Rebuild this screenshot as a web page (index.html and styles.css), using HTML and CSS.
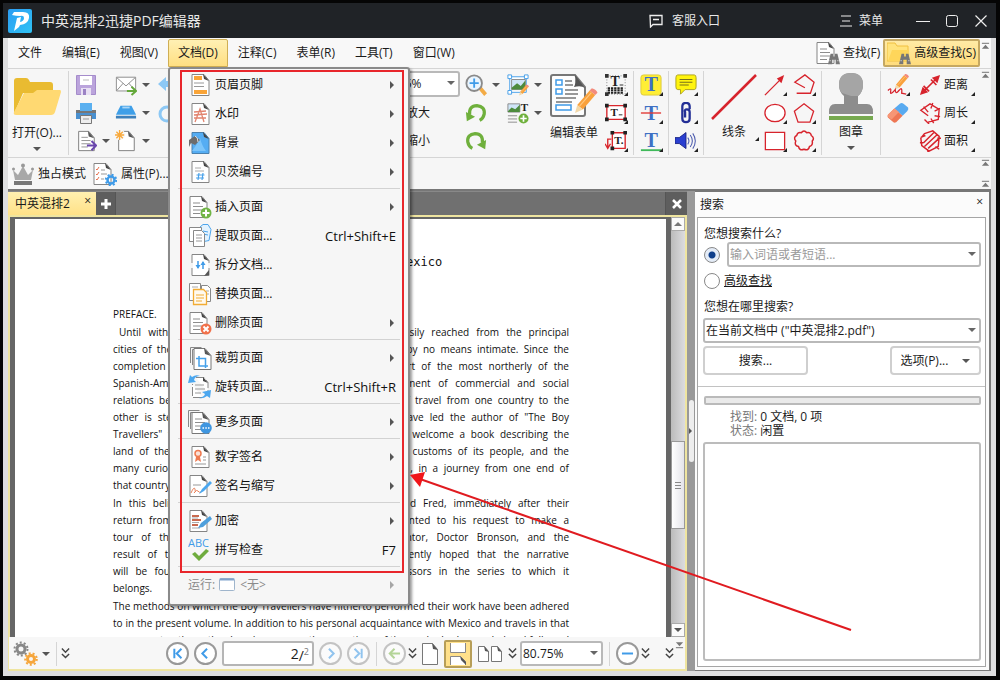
FILE: index.html
```html
<!DOCTYPE html>
<html lang="zh-CN">
<head>
<meta charset="utf-8">
<title>中英混排2迅捷PDF编辑器</title>
<link rel="stylesheet" href="styles.css">
</head>
<body>
<svg class="defs" aria-hidden="true">
  <symbol id="doc" viewBox="0 0 24 24"><path d="M4 1.500h12l5 6v15H4z" fill="#fff" stroke="#858585"/><path d="M15 1l6 7-5-2z" fill="#444"/></symbol>
  <symbol id="lines" viewBox="0 0 24 24"><path d="M7 8h7M7 11.500h10M7 15h10M7 18.500h7" stroke="#8d8d8d" fill="none"/></symbol>
  <symbol id="pencil" viewBox="0 0 24 24"><path d="M6 16L17 3l5 4-11 13z" fill="#f9a13c"/><path d="M17 3l2-2q4 1 5 4l-2 2z" fill="#f38b7c"/><path d="M6 16l5 4-7 3z" fill="#f3d8a8"/><path d="M8 17L18.500 5" stroke="#ffc880"/></symbol>
  <symbol id="chev" viewBox="0 0 10 14"><path d="M1 1.500l4 4 4-4M1 7.500l4 4 4-4" fill="none" stroke="#444" stroke-width="1.600"/></symbol>
  <symbol id="top" viewBox="0 0 10 8"><path d="M1 1h8" stroke="#666"/><path d="M5 2.500L9 7H1z" fill="#777"/></symbol>
  <symbol id="bino" viewBox="0 0 14 14"><path d="M3 1h3v3h2V1h3l3 12H9V8H5v5H0z" fill="#777"/><path d="M1.500 9h2M10.500 9h2" stroke="#ccc"/></symbol>
  <symbol id="edpage" viewBox="0 0 24 24"><path d="M4 1.500h11l6 7v14H4z" fill="#fff" stroke="#777"/><path d="M14 1l7 8-6-2z" fill="#555"/></symbol>
</svg>

<header class="titlebar">
  <svg class="logo" viewBox="0 0 24 24"><defs><linearGradient id="lg" x2="1" y2="1"><stop stop-color="#2c9cf2"/><stop offset="1" stop-color="#2fc3f5"/></linearGradient></defs><rect width="24" height="24" rx="2" fill="url(#lg)"/><path d="M6 3h9q7 0 6 6-1 6-9 7l-1 2-5 4 3-13 4-1-1 5q4-1 4-4t-4-2q-4 0-8-1z" fill="#fff"/></svg>
  <h1>中英混排2迅捷PDF编辑器</h1>
  <button class="tb service"><svg width="14" height="14" viewBox="0 0 14 14"><path d="M1 1.500h12v9H4L1.500 13z M4 5.500h6" fill="none" stroke="#eee" stroke-width="1.300"/></svg>客服入口</button>
  <button class="tb main"><svg width="14" height="14" viewBox="0 0 14 14"><path d="M2 2h10M3 7h8M1 12h12" stroke="#eee"/></svg>菜单</button>
  <button class="tb win" aria-label="最小化"><svg width="14" height="14" viewBox="0 0 14 14"><path d="M0 7.500h14" stroke="#eee"/></svg></button>
  <button class="tb win" aria-label="最大化"><svg width="14" height="14" viewBox="0 0 14 14"><rect x="1.500" y="1.500" width="11" height="11" rx="2" fill="none" stroke="#eee"/></svg></button>
  <button class="tb win" aria-label="关闭"><svg width="14" height="14" viewBox="0 0 14 14"><path d="M1.500 1.500l11 11M12.500 1.500l-11 11" stroke="#eee" stroke-width="1.200"/></svg></button>
</header>

<div class="frame">
<div class="app">
  <nav class="menubar">
    <button>文件</button><button>编辑(E)</button><button>视图(V)</button>
    <div class="dropdown">
      <button class="open">文档(D)</button>
      <div class="menu" role="menu">
        <button class="mi"><svg><use href="#doc"/><path d="M6 3h8v4H6zM6 17h13v4H6z" fill="#f9a437"/><path d="M6 10h10M6 13.500h10" stroke="#999"/></svg>页眉页脚<i class="sub"></i></button>
        <button class="mi"><svg><use href="#doc"/><path d="M7 20l5-13 4 13M6 10l12-1M6 13l13-1M6 16l12 0" fill="none" stroke="#e2846f" stroke-width="1.300"/></svg>水印<i class="sub"></i></button>
        <button class="mi"><svg><path d="M4 1.500h12l5 6v15H4z" fill="#55adf3" stroke="#4a80ad"/><path d="M15 1l6 7-5-2z" fill="#444"/><path d="M4 20q5-6 8-13 2 8 6 13z" fill="#7cc5fa"/><path d="M1 9l6-4 5 4-5 5-4-2-2 4z" fill="#6c6c6c"/><path d="M7 5q3 1 3 6" stroke="#ddd" fill="none"/></svg>背景<i class="sub"></i></button>
        <button class="mi"><svg><use href="#doc"/><path d="M7 8h6M7 11h9" stroke="#aaa"/><path d="M11 13l-1 7M15 13l-1 7M8.500 15h8M8 18h8" stroke="#4aa2ea" stroke-width="1.200"/></svg>贝茨编号<i class="sub"></i></button>
        <hr>
        <button class="mi"><svg><g transform="translate(-2)"><use href="#doc"/><use href="#lines"/></g><circle cx="18" cy="18" r="5.500" fill="#70b545"/><path d="M18 14.500v7M14.500 18h7" stroke="#fff" stroke-width="2"/></svg>插入页面<i class="sub"></i></button>
        <button class="mi"><svg><path d="M12 3l3-2.500h5l3 5-2 11-5 1z" fill="#e3f3ff" stroke="#4da5ec"/><path d="M15 7l5 1M15 10l5 1" stroke="#4da5ec"/><path d="M1.500 3.500h12v14h-12z" fill="#fff" stroke="#888"/><path d="M5.500 6.500h8l3 3v13h-11z" fill="#fff" stroke="#888"/><path d="M8 11h6M8 14h6M8 17h6" stroke="#999"/></svg>提取页面...<kbd>Ctrl+Shift+E</kbd></button>
        <button class="mi"><svg><use href="#doc"/><path d="M21 17l-5 6 5-1z" fill="#555"/><path d="M10 8v7M15 16V9" stroke="#3f9be8" stroke-width="1.500"/><path d="M7.500 12h5L10 16zM12.500 12h5L15 8z" fill="#3f9be8"/><path d="M4 10v5M21 10v5" stroke="#f5f5f5" stroke-width="2"/></svg>拆分文档...</button>
        <button class="mi"><svg><path d="M1.500 1.500h11v17h-11z" fill="#fff" stroke="#888"/><path d="M13.500 3.500h6l3 3v13h-9z" fill="#fff" stroke="#888"/><path d="M4 5h6M18 9h3M18 12h3" stroke="#aaa"/><path d="M5.500 7.500h10l3 3v12h-13z" fill="#fffaf0" stroke="#f2ac34" stroke-width="1.300"/><path d="M8 13h8M8 16h8M8 19h6" stroke="#f2ac34"/></svg>替换页面...</button>
        <button class="mi"><svg><g transform="translate(-2)"><use href="#doc"/><use href="#lines"/></g><circle cx="18" cy="18" r="5.500" fill="#f1714a"/><path d="M15.500 15.500l5 5M20.500 15.500l-5 5" stroke="#fff" stroke-width="2"/></svg>删除页面<i class="sub"></i></button>
        <hr>
        <button class="mi"><svg><path d="M2.500 17v-15.500h11M4.500 19V3.500h11" fill="none" stroke="#888"/><g transform="translate(2 1)"><use href="#edpage"/></g><path d="M11 10v10h9M8 12.500h9.500V22" stroke="#45a1ea" stroke-width="1.500" fill="none"/></svg>裁剪页面<i class="sub"></i></button>
        <button class="mi"><svg><path d="M8 2.500h8l4 5V18M14 22.500H4.500V9" fill="#fff" stroke="#888" stroke-dasharray="9 2"/><path d="M15 2l5 6-5-2z" fill="#444"/><path d="M7 10h9M7 14h10M7 18h6" stroke="#999"/><path d="M0 8l2-8 2 2q4-3 8-1-5 0-6 4l2 2zM23 15l-1 8-3-2q-4 3-8 2 5-1 6-4l-3-2z" fill="#4ba7ef"/></svg>旋转页面...<kbd>Ctrl+Shift+R</kbd></button>
        <hr>
        <button class="mi"><svg><path d="M.5 17V.5h11M2.500 19V2.500h11" fill="none" stroke="#888"/><g transform="translate(0 1)"><use href="#edpage"/><use href="#lines"/></g><circle cx="18" cy="18" r="5.800" fill="#3f96e0"/><path d="M14.500 18h1.500M17.300 18h1.500M20 18h1.500" stroke="#fff" stroke-width="1.600"/></svg>更多页面<i class="sub"></i></button>
        <hr>
        <button class="mi"><svg><use href="#doc"/><circle cx="10" cy="8.500" r="3" fill="#fbe0d6" stroke="#ee7a50" stroke-width="1.500"/><path d="M8 12l-1 5 3-2 3 2-1-5" fill="#ee7a50"/><path d="M15 12h3M15 15h3M7 19h11" stroke="#999"/></svg>数字签名<i class="sub"></i></button>
        <button class="mi"><svg><g transform="translate(-2)"><use href="#doc"/></g><path d="M5 11h8" stroke="#999"/><path d="M3 19q3-7 4-4t-1 4q3-4 4-2t3 1" stroke="#e9825b" fill="none"/><path d="M11 20l3-5 8-8 2 2-8 8z" fill="#4ba7ef"/></svg>签名与缩写<i class="sub"></i></button>
        <hr>
        <button class="mi"><svg><g transform="translate(-2)"><use href="#doc"/></g><path d="M4 7h7M4 11h9M4 16h6" stroke="#c96a4f" stroke-width="2.200"/><path d="M4 9h6M4 13.500h7M4 19h8" stroke="#aaa"/><path d="M10 19l3-5 9-7 2 3-9 8z" fill="#4e9fdc"/></svg>加密<i class="sub"></i></button>
        <button class="mi"><svg><text x="0" y="9" class="abc">ABC</text><path d="M4 16l3-2 4 4 7-7 3 2-10 10z" fill="#6fac3e"/></svg>拼写检查<kbd>F7</kbd></button>
        <hr>
        <button class="mi run" disabled>运行:<svg class="runico" viewBox="0 0 16 13"><rect x=".5" y=".5" width="15" height="12" rx="1" fill="#fff" stroke="#9fb5cc"/><path d="M1 1.500h14" stroke="#7fa3cc" stroke-width="2"/></svg>&lt;无&gt;<i class="sub"></i></button>
      </div>
    </div>
    <button>注释(C)</button><button>表单(R)</button><button>工具(T)</button><button>窗口(W)</button>
    <button class="find"><svg width="24" height="24" viewBox="0 0 24 24"><g transform="translate(-3)"><use href="#doc"/><use href="#lines"/></g><use href="#bino" x="12" y="12" width="12" height="12"/></svg>查找(F)</button>
    <button class="find adv"><svg width="24" height="24" viewBox="0 0 24 24"><path d="M0 2h8l2 3h11v15H0z" fill="#ffe37d" stroke="#f0c040"/><path d="M1 20L5 9h17l-2 11z" fill="#ffd65a"/><use href="#bino" x="12" y="12" width="12" height="12"/></svg>高级查找(S)</button>
    <svg class="grip"><use href="#top"/></svg>
  </nav>

  <div class="ribbon">
    <button class="big openbtn"><svg width="48" height="40" viewBox="0 0 48 40"><path d="M1 3q0-3 3-3h9q2 0 3 2l1 2h20q3 0 3 3v8H10L1 36z" fill="#e9bb31"/><path d="M11 15h9l4-3h23q1 0 1 2l-6 20q-1 3-4 3H3q-3 0-2-3z" fill="#ffd972"/></svg><span>打开(O)...</span><i class="dn"></i></button>
    <div class="sep"></div>
    <div class="col wide">
      <button aria-label="保存"><svg><path d="M1.500 1.500h19v19h-19z" fill="#bba4dc" stroke="#a58ccb"/><path d="M5 2h12v9H5z" fill="#fff"/><path d="M8 6h6" stroke="#bbb"/><path d="M6 14h10v7H6z" fill="#e8e0f3"/><path d="M8 15h3v6H8z" fill="#9b82c4"/></svg></button>
      <button aria-label="打印"><svg><path d="M1 8h20v9H1z" fill="#4a90cf"/><path d="M1 8h20v3H1z" fill="#777"/><path d="M5 1h12v8H5z" fill="#5ab0f0"/><path d="M5.500 13.500h11v8h-11z" fill="#eee" stroke="#777"/><path d="M8 17h6" stroke="#999"/></svg></button>
      <button aria-label="导出"><svg viewBox="0 0 24 24"><use href="#edpage"/><use href="#lines"/><path d="M13 17h9M18 12l5 5-5 5" fill="none" stroke="#6a46ad" stroke-width="2.200"/></svg><i class="dn"></i></button>
    </div>
    <div class="col wide">
      <button aria-label="邮件"><svg viewBox="0 0 24 24"><path d="M1.500 3.500h21v15h-21z" fill="#fff" stroke="#888"/><path d="M2 4l10 9L22 4M2 18l7-8M22 18l-7-8" fill="none" stroke="#888"/><path d="M13 18.500h9M18 14l5 4.500-5 4.500" fill="none" stroke="#64a83a" stroke-width="2.200"/></svg><i class="dn"></i></button>
      <button aria-label="扫描"><svg viewBox="0 0 24 24"><path d="M6 4h12l5 10H1z" fill="#3f9fe8"/><path d="M8 6h8" stroke="#a9d6f8" stroke-width="2"/><path d="M1 15h22v3H1z" fill="#3d80bb"/></svg><i class="dn"></i></button>
      <button aria-label="新建"><svg viewBox="0 0 24 24"><use href="#edpage"/><circle cx="5" cy="5" r="6" fill="#f7f7f7"/><path d="M5 0v11M0 5.500h10M1.500 2l7 7M8.500 2l-7 7" stroke="#f8a93c" stroke-width="1.500"/></svg><i class="dn"></i></button>
    </div>
    <div class="col">
      <button aria-label="撤销"><svg><path d="M3 10l8-7v4h9v6h-9v4z" fill="#8cc8f5"/></svg></button>
      <button aria-label="重做"><svg><circle cx="12" cy="12" r="7" fill="none" stroke="#8cc8f5" stroke-width="3"/></svg></button>
    </div>
    <div class="col zoom">
      <div class="select"><select aria-label="缩放比例"><option>80.75%</option></select></div>
      <button>放大</button>
      <button>缩小</button>
    </div>
    <div class="col wide rot">
      <button aria-label="缩放工具"><svg viewBox="0 0 24 24"><path d="M15 17l3-3 6 7-3 3z" fill="#f3ab45"/><circle cx="10" cy="10" r="8.500" fill="#e9f5ff" stroke="#8a8a8a" stroke-width="2"/><path d="M10 5v10M5 10h10" stroke="#3f9be8" stroke-width="2"/></svg><i class="dn"></i></button>
      <button aria-label="向左旋转"><svg viewBox="0 0 24 24"><path d="M5 14Q4 4 13 4q9 1 8 9-1 5-5 7" fill="none" stroke="#6fb03c" stroke-width="3.500"/><path d="M1 11l1 10 9-5z" fill="#6fb03c"/></svg></button>
      <button aria-label="向右旋转"><svg viewBox="0 0 24 24"><path d="M19 14Q20 4 11 4q-9 1-8 9 1 5 5 7" fill="none" stroke="#6fb03c" stroke-width="3.500"/><path d="M23 11l-1 10-9-5z" fill="#6fb03c"/></svg></button>
    </div>
    <div class="col wide img">
      <button aria-label="编辑图像"><svg viewBox="0 0 24 24"><path d="M3 3h18v17H3z" fill="#fff" stroke="#3f9be8"/><path d="M5 6h15v11H5z" fill="#cfe5f7" stroke="#888"/><path d="M5 15l6-5 4 3 5-6v10H5z" fill="#4d8b3d"/><path d="M1 1h4v4H1zM19 1h4v4h-4zM1 18h4v4H1z" fill="#fff" stroke="#3f9be8"/><use href="#pencil" x="11" y="11" width="13" height="13"/></svg><i class="dn"></i></button>
      <button aria-label="添加内容"><svg viewBox="0 0 24 24"><path d="M1 2h13v9H1z" fill="#cfe5f7" stroke="#888"/><path d="M1 10l4-4 4 2 5-5v8H1z" fill="#4d8b3d"/><text x="15" y="10" class="serif sm">T</text><path d="M1 15h10M1 18.500h10M1 22h10" stroke="#888"/><circle cx="18" cy="18" r="5.500" fill="#6fb03c"/><path d="M18 14.500v7M14.500 18h7" stroke="#fff" stroke-width="1.800"/></svg><i class="dn"></i></button>
    </div>
    <button class="big form"><svg width="48" height="44" viewBox="0 0 48 44"><path d="M3 1h22l10 12v27q0 2-2 2H3q-2 0-2-2V3q0-2 2-2z" fill="#fdfdfd" stroke="#777" stroke-width="2"/><path d="M25 1q1 9-1 12 7-2 11 1z" fill="#555"/><path d="M6 6h6v5H6zM6 15h6v5H6zM6 31h15v5H6z" fill="#fff" stroke="#3f9be8" stroke-width="1.500"/><path d="M15 7h7M15 11h8M15 16h13M15 20h13M6 24h20M6 28h16" stroke="#777" stroke-width="1.500"/><use href="#pencil" x="20" y="13" width="28" height="27"/></svg><span>编辑表单</span></button>
    <div class="col">
      <button class="more" aria-label="打字机"><svg viewBox="0 0 24 24"><path d="M2 2h20v20H2z" fill="none" stroke="#777" stroke-dasharray="1 2"/><path d="M0 0h4v4H0zM20 0h4v4h-4zM0 20h4v4H0z" fill="#333"/><text x="6" y="13" class="serif">T</text><path d="M16 12h4" stroke="#222"/><path d="M3 15.500h17M3 18h17M3 20.500h17" stroke="#222" stroke-width="2" stroke-dasharray="2.500 1"/></svg></button>
      <button class="more" aria-label="文本框"><svg viewBox="0 0 24 24"><path d="M2 4h20v15H2z" fill="#fff" stroke="#d9262c" stroke-width="1.500"/><path d="M0 2h4v4H0zM20 2h4v4h-4zM0 17h4v4H0zM20 17h4v4h-4z" fill="#222"/><text x="6" y="15" class="serif sm">T</text><path d="M15 14h4" stroke="#222"/></svg></button>
      <button class="more" aria-label="标注"><svg viewBox="0 0 24 24"><path d="M8 3h14v17H8z" fill="#fff" stroke="#d9262c" stroke-width="1.500"/><path d="M7 10H3v9M0 15l3 5 3-5" fill="none" stroke="#d9262c" stroke-width="1.500"/><path d="M6 1h4v4H6zM20 1h4v4h-4zM6 18h4v4H6z" fill="#222"/><text x="10" y="15" class="serif sm">T.</text></svg></button>
    </div>
    <div class="sep"></div>
    <div class="col">
      <button class="more" aria-label="高亮"><svg viewBox="0 0 24 24"><rect x="1" y="1" width="22" height="22" rx="3" fill="#ffee35" stroke="#dcc93b"/><text x="5" y="19" class="serif blue">T</text></svg></button>
      <button class="more" aria-label="删除线"><svg viewBox="0 0 24 24"><text x="5" y="20" class="serif blue">T</text><path d="M1 12h22" stroke="#e23a35" stroke-width="1.500"/></svg></button>
      <button class="more" aria-label="下划线"><svg viewBox="0 0 24 24"><text x="5" y="18" class="serif blue">T</text><path d="M1 22h22" stroke="#3fb95a" stroke-width="2"/></svg></button>
    </div>
    <div class="sep"></div>
    <div class="col">
      <button class="more" aria-label="附注"><svg viewBox="0 0 24 24"><path d="M3 1h18q2 0 2 3v10q0 3-2 3H11l-5 5v-5H3q-2 0-2-3V4q0-3 2-3z" fill="#fff40e" stroke="#a99e1a"/><path d="M5 6h14M5 9h14M5 12h10" stroke="#6a6420"/></svg></button>
      <button class="more" aria-label="附件"><svg viewBox="0 0 24 24"><path d="M16 8V5q0-4-4-4T8 5v13q0 4 4 4t4-4v-7q0-3-3-3t-2 3v6" fill="none" stroke="#232f96" stroke-width="2.500"/></svg></button>
      <button class="more" aria-label="声音"><svg viewBox="0 0 26 24"><path d="M0 8h5l8-6v19l-8-6H0z" fill="#2a3fd0" stroke="#16207c"/><path d="M15 8q3 4 0 8M18 5q5 7 0 14M21 3q6 9 0 18" fill="none" stroke="#4a59ad" stroke-width="1.200"/></svg></button>
    </div>
    <div class="sep"></div>
    <button class="big more line"><svg width="48" height="48" viewBox="0 0 48 48"><path d="M2 46L46 2" stroke="#d7232c" stroke-width="2.500"/></svg><span>线条</span></button>
    <div class="col">
      <button class="more" aria-label="箭头"><svg viewBox="0 0 24 24"><path d="M1 23L20 4" stroke="#d7232c" stroke-width="1.400"/><path d="M14 5l8-4-3 9z" fill="#d7232c"/></svg></button>
      <button class="more" aria-label="椭圆"><svg viewBox="0 0 24 24"><ellipse cx="12" cy="12" rx="11" ry="9.500" fill="#fff" stroke="#d7232c" stroke-width="1.400"/></svg></button>
      <button class="more" aria-label="矩形"><svg viewBox="0 0 24 24"><path d="M1.500 2.500h21v19h-21z" fill="#fff" stroke="#d7232c" stroke-width="1.400"/></svg></button>
    </div>
    <div class="col g5">
      <button class="more" aria-label="折线"><svg viewBox="0 0 24 24"><path d="M13 15L2 9 13 1l10 8-4 12H4" fill="none" stroke="#d7232c" stroke-width="1.400"/></svg></button>
      <button class="more" aria-label="多边形"><svg viewBox="0 0 24 24"><path d="M12 2l10.500 8-4 12h-13l-4-12z" fill="none" stroke="#d7232c" stroke-width="1.400"/></svg></button>
      <button class="more" aria-label="云形"><svg viewBox="0 0 24 24"><path d="M9 3q3-4 6 0 4-1 5 3 4 3 1 6 1 5-3 6-1 5-6 3-5 2-6-3-5-1-3-6-3-4 1-6 1-4 5-3z" fill="none" stroke="#d7232c" stroke-width="1.600"/></svg></button>
    </div>
    <div class="sep"></div>
    <button class="big stamp"><svg width="46" height="48" viewBox="0 0 46 48"><path d="M23 0q12 0 12 12 0 7-5 11v8h9q6 0 6 8v2H1v-2q0-8 6-8h9v-8q-5-4-5-11Q11 0 23 0z" fill="#8d8d8d"/><path d="M23 0q12 0 12 12 0 7-5 11h-7L14 20q-3-3-3-8Q11 0 23 0z" fill="#a5a5a5"/><path d="M1 43h44v4H1z" fill="#76a94f"/></svg><span>图章</span><i class="dn"></i></button>
    <div class="sep"></div>
    <div class="col">
      <button class="more" aria-label="铅笔"><svg viewBox="0 0 24 24"><use href="#pencil" x="5" y="-1" width="19" height="19"/><path d="M1 18q4-4 3 1t5-2q0 6 4 1t3 3l5 1" fill="none" stroke="#d7232c" stroke-width="1.400"/></svg></button>
      <button aria-label="橡皮擦"><svg viewBox="0 0 24 24"><path d="M14 2q2-2 4 0l5 4q1 2-1 4l-5 5-9-8z" fill="#58aaf0"/><path d="M8 7l9 8-7 7q-2 1-3 0l-6-5q-1-2 0-3z" fill="#ee7754"/><path d="M8 7l5 4-8 8-4-3v-2z" fill="#f79675"/></svg></button>
    </div>
    <div class="col meas">
      <button class="more"><svg viewBox="0 0 24 24"><path d="M3 21L21 3M5 13l6 6M13 6l6 6" fill="none" stroke="#d7232c" stroke-width="1.800"/><path d="M14 4l9-3-3 9zM1 23l3-9 6 6z" fill="#d7232c"/></svg>距离</button>
      <button class="more"><svg viewBox="0 0 24 24"><path d="M10 15L2 9l10-7 10 6-1 11-11 3M5 5l5 6M15 1l-2 6M17 10l6-3M17 15l6 1M13 18l3 5M6 19l5 5" fill="none" stroke="#d7232c" stroke-width="1.500"/></svg>周长</button>
      <button class="more"><svg viewBox="0 0 24 24"><path d="M6 4l9-3 7 6-1 11-10 5-8-6-1-8zM5 14L16 3M6 18L20 5M10 20L21 10M2 8l5-2M1 14l4 0M9 21l1 3M18 18l4 3M20 9l4 0" fill="none" stroke="#d7232c" stroke-width="1.600"/></svg>面积</button>
    </div>
    <svg class="grip"><use href="#top"/></svg>
  </div>

  <div class="ribbon2">
    <button><svg width="22" height="22" viewBox="0 0 22 22"><path d="M1 7l5 5 5-9 5 9 5-5-2 10H3z" fill="#a8a8a8"/><path d="M2 18h18v4H2z" fill="#777"/><circle cx="11" cy="2.500" r="2" fill="#999"/><circle cx="1.500" cy="6" r="1.500" fill="#999"/><circle cx="20.500" cy="6" r="1.500" fill="#999"/></svg>独占模式</button>
    <button><svg width="24" height="24" viewBox="0 0 24 24"><g transform="translate(-3)"><use href="#doc"/></g><path d="M3 7l1 1 2-3M3 12l1 1 2-3M3 17l1 1 2-3" fill="none" stroke="#e6704f"/><path d="M8 8h4M8 12h6M8 17h3" stroke="#999"/><circle cx="18" cy="18" r="3.500" fill="none" stroke="#3f9be8" stroke-width="2.500"/><circle cx="18" cy="18" r="5.200" fill="none" stroke="#3f9be8" stroke-width="2" stroke-dasharray="2 2.080"/></svg>属性(P)...</button>
    <div class="grips"><svg class="grip"><use href="#top"/></svg><svg class="grip"><use href="#top"/></svg></div>
  </div>

  <main class="work">
    <section class="docpane">
      <div class="tabs">
        <div class="tab">中英混排2<button aria-label="关闭标签">×</button></div>
        <button class="plus" aria-label="新建标签"><svg width="10" height="10" viewBox="0 0 10 10"><path d="M5 0v10M0 5h10" stroke="#fff" stroke-width="3"/></svg></button>
        <button class="closeall" aria-label="关闭文档"><svg width="10" height="10" viewBox="0 0 10 10"><path d="M1 1l8 8M9 1L1 9" stroke="#fff" stroke-width="2.500"/></svg></button>
      </div>
      <div class="view">
        <div class="viewport">
        <article class="page">
          <h2>The Boy Travellers in Mexico</h2>
          <p class="left"><span>PREFACE.</span></p>
          <p>
            <span class="ind">Until within the past few years, Mexico was not so easily reached from the principal</span>
            <span>cities of the United States, and our relations with it were by no means intimate. Since the</span>
            <span>completion of the several railways which lead to the heart of the most northerly of the</span>
            <span>Spanish-American republics, the rapid and large development of commercial and social</span>
            <span>relations between them has been so great, and the tide of travel from one country to the</span>
            <span>other is steadily increasing. These several circumstances have led the author of "The Boy</span>
            <span>Travellers" to believe that all the youth of the land would welcome a book describing the</span>
            <span>land of the Aztecs, its long history, and the manners and customs of its people, and the</span>
            <span>many curious things that are there to be seen, all through, in a journey from one end of</span>
            <span class="end">that country to the other.</span>
          </p>
          <p>
            <span>In this belief he called all together his friends, Frank and Fred, immediately after their</span>
            <span>return from the Congo; they readily and very gladly assented to his request to make a</span>
            <span>tour of the land in company with their kind old mentor, Doctor Bronson, and the</span>
            <span>result of their journey is told in full here. It is confidently hoped that the narrative</span>
            <span>will be found to be no less useful than all its predecessors in the series to which it</span>
            <span class="end">belongs.</span>
          </p>
          <p>
            <span>The methods on which the Boy Travellers have hitherto performed their work have been adhered</span>
            <span>to in the present volume. In addition to his personal acquaintance with Mexico and travels in that</span>
            <span class="ind2">country, the author has drawn upon the narrations of those who had preceded and followed</span>
          </p>
        </article>
        </div>
        <div class="scroll">
          <button aria-label="向上滚动"><i class="up"></i></button>
          <div class="thumb"><i></i><i></i><i></i></div>
          <button aria-label="向下滚动"><i class="dn"></i></button>
        </div>
      </div>
      <footer class="status">
        <button aria-label="设置" class="gears"><svg width="26" height="26" viewBox="0 0 26 26"><g fill="none"><circle cx="8" cy="8" r="4" stroke="#888" stroke-width="3"/><circle cx="8" cy="8" r="6.500" stroke="#888" stroke-width="2" stroke-dasharray="2 2.080"/><circle cx="18" cy="18" r="3.500" stroke="#f6a63c" stroke-width="3"/><circle cx="18" cy="18" r="5.800" stroke="#f6a63c" stroke-width="2" stroke-dasharray="2 2.040"/></g></svg><i class="dn"></i></button>
        <div class="sep"></div>
        <button class="cv" aria-label="更多"><svg><use href="#chev"/></svg></button>
        <div class="nav">
          <button class="rd" aria-label="第一页"><svg viewBox="0 0 24 24"><path d="M8 6v12M17 6l-6 6 6 6" /></svg></button>
          <button class="rd" aria-label="上一页"><svg viewBox="0 0 24 24"><path d="M14 6l-6 6 6 6"/></svg></button>
          <label class="pageno"><input aria-label="页码" value="2"><span>/<sup>2</sup></span></label>
          <button class="rd off" aria-label="下一页"><svg viewBox="0 0 24 24"><path d="M10 6l6 6-6 6"/></svg></button>
          <button class="rd off" aria-label="最后一页"><svg viewBox="0 0 24 24"><path d="M16 6v12M7 6l6 6-6 6"/></svg></button>
        </div>
        <div class="sep"></div>
        <button class="rd off green" aria-label="后退"><svg viewBox="0 0 24 24"><path d="M19 12H6M12 6l-6 6 6 6"/></svg></button>
        <button class="cv" aria-label="更多"><svg><use href="#chev"/></svg></button>
        <button class="pg" aria-label="单页"><svg width="18" height="22" viewBox="0 0 18 22"><path d="M1.500.5h10l5 6v15h-15z" fill="#fff" stroke="#777"/><path d="M11 0l6 7-5-1z" fill="#555"/></svg></button>
        <button class="pg on" aria-label="连续"><svg width="18" height="24" viewBox="0 0 18 24"><path d="M1.500 1v9.500h15V1M1.500 23v-8.500h10l5 5V23" fill="#fff" stroke="#888"/><path d="M11 14l6 6v3l-5-5z" fill="#555"/></svg></button>
        <button class="pg" aria-label="双页"><svg width="26" height="18" viewBox="0 0 26 18"><path d="M1.500 1.500h6l4 5v10h-10zM14.500 1.500h6l4 5v10h-10z" fill="#fff" stroke="#777"/><path d="M7 1l5 6-4-1zM20 1l5 6-4-1z" fill="#555"/></svg></button>
        <button class="cv" aria-label="更多"><svg><use href="#chev"/></svg></button>
        <div class="select"><select aria-label="缩放"><option>80.75%</option></select></div>
        <div class="sep"></div>
        <button class="rd" aria-label="缩小"><svg viewBox="0 0 24 24"><path d="M5 12h14"/></svg></button>
        <button class="cv" aria-label="更多"><svg><use href="#chev"/></svg></button>
        <button class="cv last" aria-label="更多"><svg><use href="#chev"/></svg></button>
        <svg class="grip flip"><use href="#top"/></svg>
      </footer>
    </section>
    <div class="splitter"><button aria-label="折叠面板"><i class="sub"></i></button></div>
    <aside class="search">
      <header><h2>搜索</h2><button aria-label="关闭">×</button></header>
      <div class="body">
        <h3>您想搜索什么?</h3>
        <div class="row"><input type="radio" name="mode" aria-label="搜索词语" checked><div class="select hint"><select aria-label="搜索词语"><option>输入词语或者短语...</option></select></div></div>
        <div class="row adv"><input type="radio" name="mode" aria-label="高级查找"><a href="#">高级查找</a></div>
        <label class="h" for="where">您想在哪里搜索?</label>
        <div class="select"><select id="where"><option>在当前文档中 ("中英混排2.pdf")</option></select></div>
        <div class="row btns"><button class="go">搜索...</button><button class="opt">选项(P)...<i class="dn"></i></button></div>
        <div class="rule"></div>
        <div class="progress"></div>
        <dl><div><dt>找到:</dt><dd>0 文档, 0 项</dd></div><div><dt>状态:</dt><dd>闲置</dd></div></dl>
        <div class="results"></div>
      </div>
    </aside>
  </main>
</div>
</div>

<svg class="annotation" viewBox="0 0 1000 680" width="1000" height="680" aria-hidden="true">
  <rect x="181" y="71" width="222" height="501" fill="none" stroke="#e8262b" stroke-width="2"/>
  <path d="M420 479L851 630" stroke="#e01b20" stroke-width="2"/><path d="M410 475l15-3-5 15z" fill="#f0151a"/>
</svg>
</body>
</html>
```
FILE: styles.css
```css
* { box-sizing: border-box; }
body {
  margin: 0; min-height: 100vh; padding: 3px 4px 4px 3px;
  display: flex; flex-direction: column; position: relative;
  background: #050505; color: #1a1a1a;
  font: 12px/16px "Open Sans", "Noto Sans CJK SC", sans-serif;
}
button, input, select { font: inherit; color: inherit; margin: 0; padding: 0; border: 0; background: none; border-radius: 0; }
button { display: flex; align-items: center; white-space: nowrap; flex: none; }
svg { display: block; flex: none; }
h1, h2, h3, p, dl, dd, hr { margin: 0; font-weight: 400; }
.defs { position: absolute; width: 0; height: 0; }
.annotation { position: absolute; left: 0; top: 0; pointer-events: none; z-index: 20; }
.serif { font: bold 15px "Liberation Serif", serif; fill: #222; }
.serif.sm { font-size: 12px; }
.serif.blue { font-size: 22px; fill: #3f70c4; }
.abc { font: 11px "Open Sans", sans-serif; fill: #3f9be8; }

i.dn, i.up, i.sub { width: 0; height: 0; border: 4px solid transparent; flex: none; }
i.dn { border-top-color: #555; border-bottom: 0; }
i.up { border-bottom-color: #777; border-top: 0; }
i.sub { border-left-color: #555; border-right: 0; }

.titlebar { height: 35px; display: flex; align-items: center; padding: 0 8px 0 5px; background: #202327; color: #e8e8e8; }
.logo { width: 24px; height: 24px; }
.titlebar h1 { flex: 1; margin-left: 9px; font-size: 14px; line-height: 20px; }
.tb.service { gap: 9px; margin-right: 119px; }
.tb.main { gap: 6px; margin-right: 33px; }
.tb.win + .tb.win { margin-left: 15px; }

.frame { flex: 1; display: flex; background: #dededf; padding: 0 5px 5px; }
.app { flex: 1; min-width: 0; display: flex; flex-direction: column; background: #f6f6f6; }

.menubar { height: 31px; display: flex; align-items: center; border-bottom: 1px solid #d5d5d5; background: #f8f8f8; }
.menubar > button, .dropdown > button { height: 28px; padding: 0 9px; border: 1px solid transparent; }
.dropdown { position: relative; z-index: 10; }
.dropdown > button.open { border-color: #cfae54; border-radius: 2px 2px 0 0; background: linear-gradient(#fff0b4, #ffdf82); }
.menubar > .find { margin-left: auto; padding: 0 2px; gap: 3px; }
.menubar > .find.adv { margin-left: 0; border: 2px solid #c5a862; border-radius: 2px; background: linear-gradient(#ffeaa5, #ffdc7d); }
.grip { width: 9px; height: 8px; margin: 0 1px 14px; }

.menu {
  position: absolute; left: 0; top: 28px; width: 242px; padding: 1px 0 5px;
  background: #f6f6f6; border: 2px solid #8a8a8a; border-radius: 3px; box-shadow: 2px 2px 3px rgba(0,0,0,.4);
}
.mi { width: 100%; height: 29px; padding: 0 14px 0 18px; color: #111; }
.mi svg { width: 24px; height: 24px; margin-right: 3px; }
.mi .sub, .mi kbd { margin-left: auto; }
.mi kbd { font: inherit; font-size: 13px; margin-right: -2px; }
.menu hr { height: 1px; margin: 2px 8px 3px; border: 0; background: #d2d2d2; }
.mi .runico { width: 16px; height: 13px; margin: 0 5px 0 4px; }
.mi.run { color: #8b8b8b; }
.mi.run .sub { opacity: .5; }

.ribbon { height: 89px; display: flex; align-items: flex-start; padding-top: 2px; border-bottom: 1px solid #d5d5d5; }
.col { width: 24px; flex: none; display: flex; flex-direction: column; }
.col button { height: 28px; gap: 4px; }
.col svg { width: 22px; height: 22px; margin: 0 1px; }
.col.wide { width: 40px; }
.col.zoom { width: 82px; margin-left: 200px; gap: 0; }
.col.zoom button { padding-left: 28px; }
.col.rot { margin-left: 4px; }
.col.img { margin: 0 2px; }
.col.g5 { margin-left: 5px; }
.sep { width: 1px; height: 84px; margin: 0 5px; background: #d5d5d5; flex: none; }
.big { flex-direction: column; justify-content: flex-start; width: 50px; height: 84px; }
.big.openbtn { width: 58px; padding-top: 7px; margin-right: -3px; }
.big.openbtn span { margin: 7px 0 6px; }
.big.form { width: 52px; margin-right: 4px; padding-top: 3px; }
.big.form span { margin-top: 7px; }
.big.line { padding-top: 2px; margin-right: 4px; }
.big.line span, .big.stamp span { margin-top: 3px; }
.big.stamp { width: 48px; padding-top: 2px; }
.big.stamp i { margin-top: 6px; }
.more { position: relative; }
.more::after { content: ""; position: absolute; right: 0; bottom: 3px; border: 2px solid #222; border-top-color: transparent; border-left-color: transparent; }
.big.more::after { bottom: 14px; }
.col.meas { width: 57px; margin-left: 8px; }
.col.meas button { gap: 2px; }
.ribbon > .grip { margin-left: auto; }

.ribbon2 { height: 33px; display: flex; align-items: center; padding-left: 4px; gap: 7px; border-bottom: 2px solid #777; }
.ribbon2 button { gap: 4px; }
.grips { margin-left: auto; display: flex; flex-direction: column; gap: 13px; }
.grips .grip { margin-bottom: 0; }

.work { flex: 1; display: flex; min-height: 0; background: #8d8d8d; }
.docpane { flex: 1; min-width: 0; display: flex; flex-direction: column; }
.tabs { height: 24px; display: flex; background: #707070; border-top: 1px solid #888; }
.tab { display: flex; align-items: center; width: 88px; padding-left: 7px; background: linear-gradient(#fff0b0, #ffe187); }
.tab button { margin-left: auto; padding: 0 5px 6px; }
.tabs .plus { width: 20px; justify-content: center; border-right: 1px solid #555; background: #5e5e5e; }
.tabs .closeall { width: 22px; margin-left: auto; justify-content: center; border-left: 1px solid #555; background: #5e5e5e; }
.view { flex: 1 1 0; height: 0; min-height: 0; display: flex; border: 2px solid #efe5a0; border-bottom: 0; background: #666; }
.viewport { flex: 1; min-width: 0; overflow: hidden; padding: 2px 5px 0; height: 100%; }
.page { min-height: 100%; padding: 33px 97px 0 98px; background: #fff; font: 10px/17px "Open Sans", sans-serif; color: #111; }
.page h2 { font: 12px/20px "DejaVu Sans Mono", monospace; text-align: center; margin-bottom: 34px; }
.page p { margin-bottom: 1px; }
.page span { display: block; white-space: nowrap; text-align: justify; text-align-last: justify; }
.page .left span, .page .end { text-align-last: left; }
.page .ind { padding-left: 6px; }
.page .ind2 { padding-left: 24px; }
.scroll { width: 14px; display: flex; flex-direction: column; background: linear-gradient(90deg, #bbb, #dcdcdf); }
.scroll button { height: 14px; justify-content: center; background: #fbfbfb; border: 1px solid #aaa; }
.scroll .thumb { height: 88px; margin: auto 0 94px; display: flex; flex-direction: column; justify-content: center; align-items: center; gap: 2px; border: 1px solid #999; background: linear-gradient(90deg, #fff, #e4e4ea); }
.thumb i { width: 6px; height: 1px; background: #888; }

.status { height: 34px; display: flex; align-items: center; padding: 1px 1px 0 4px; background: #f7f7f7; border: solid #efe5a0; border-width: 0 2px 2px 1px; }
.status .sep { height: 24px; margin: 0 6px; }
.gears { gap: 3px; }
.cv { width: 12px; justify-content: center; }
.gears + .sep + .cv { margin-left: -4px; }
.cv svg { width: 9px; height: 13px; }
.nav { display: flex; align-items: center; gap: 5px; margin-left: auto; }
.rd { width: 23px; height: 23px; border: 2px solid #999; border-radius: 50%; background: #fff; justify-content: center; }
.rd svg { width: 19px; height: 19px; fill: none; stroke: #3f9be8; stroke-width: 2.500; }
.rd.off { opacity: .55; }
.rd.green svg { stroke: #7fb94c; }
.pageno { display: flex; align-items: center; width: 92px; height: 25px; padding: 0 3px; border: 2px solid #b5b5b5; border-radius: 3px; background: #fff; font-size: 14px; }
.pageno input { flex: 1; width: 20px; min-width: 0; text-align: right; }
.pageno sup { font-size: 9px; color: #777; }
.pg { height: 28px; margin: 0 3px; }
.pg.on { width: 28px; margin: 0 2px; justify-content: center; border: 2px solid #b79e58; border-radius: 2px; background: #ffe08a; }
.cv.last { margin-left: 12px; }
.flip { transform: scaleY(-1); margin: 0 0 18px; }

.select { position: relative; height: 25px; }
.select select { width: 100%; height: 100%; appearance: none; padding: 0 1px; border: 2px solid #b9b9b9; border-radius: 3px; background: #fff; }
.select::after { content: ""; position: absolute; right: 5px; top: 10px; border: 4px solid transparent; border-top-color: #666; border-bottom: 0; pointer-events: none; }
.zoom .select { height: 26px; margin-bottom: 2px; }
.status .select { width: 83px; margin-left: 2px; }

.splitter { width: 8px; display: flex; align-items: center; justify-content: center; background: #999; }
.splitter button { width: 5px; height: 62px; border-radius: 3px; background: #eee; }
.splitter .sub { border-width: 3px; }

.search { width: 296px; display: flex; flex-direction: column; background: #fbfbfb; border: solid #777; border-width: 1px 2px 1px 0; padding: 0 3px 3px 2px; }
.search header { height: 25px; display: flex; align-items: center; justify-content: space-between; padding: 0 3px; }
.search h2, .search h3 { font-size: 12px; line-height: 16px; }
.search header button { padding-bottom: 6px; }
.body { flex: 1; display: flex; flex-direction: column; padding: 8px 4px 5px 5px; border: 1px solid #a5a5a5; background: #fff; }
.body h3, .body .h { padding-left: 1px; }
.row { display: flex; align-items: center; }
.row input { appearance: none; width: 16px; height: 16px; margin-left: 1px; border: 1px solid #888; border-radius: 50%; background: #fff; flex: none; }
.row input:checked { background: radial-gradient(circle, #0e3f8b 0 3px, #e4ecf7 4px); }
.row .select { flex: 1; margin-left: 7px; }
.hint select { color: #9a9a9a; }
.row.adv { height: 28px; gap: 4px; }
.row a { color: inherit; }
.body .h { margin: 4px 0 3px; }
.btns { justify-content: space-between; margin-top: 3px; }
.btns button { height: 29px; border: 2px solid #cfcfcf; border-radius: 4px; background: #fff; justify-content: center; }
.go { width: 105px; }
.opt { width: 91px; gap: 14px; }
.rule { height: 1px; margin: 11px -4px 9px -5px; background: #c2c2c2; }
.progress { height: 9px; margin-left: 1px; border: 2px solid #bababa; border-radius: 2px; background: #eaeaea; }
.body dl { margin: 5px 0 4px 27px; line-height: 14px; }
.body dl div { display: flex; gap: 3px; }
.body dt { color: #777; }
.results { flex: 1; border: 2px solid #bcbcbc; border-radius: 3px; }
```
